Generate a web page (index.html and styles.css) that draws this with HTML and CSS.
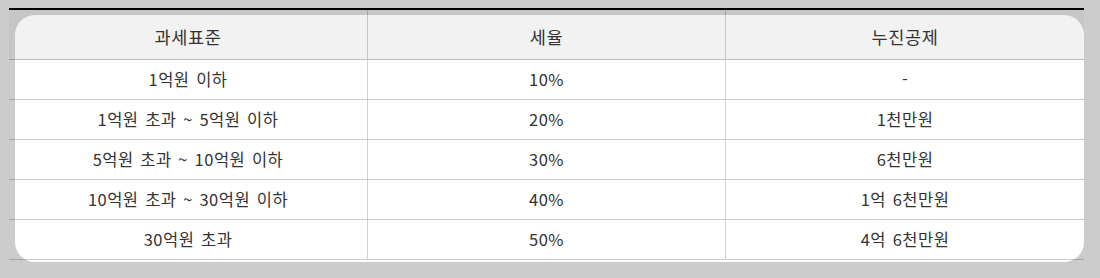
FILE: index.html
```html
<!DOCTYPE html>
<html lang="ko">
<head>
<meta charset="utf-8">
<link rel="stylesheet" href="styles.css">
</head>
<body>
<div class="wrap">
  <div class="card">
    <div class="table">
      <div class="row head">
        <div class="cell">과세표준</div>
        <div class="cell">세율</div>
        <div class="cell">누진공제</div>
      </div>
      <div class="row">
        <div class="cell">1억원 이하</div>
        <div class="cell">10%</div>
        <div class="cell">-</div>
      </div>
      <div class="row">
        <div class="cell">1억원 초과 ~ 5억원 이하</div>
        <div class="cell">20%</div>
        <div class="cell">1천만원</div>
      </div>
      <div class="row">
        <div class="cell">5억원 초과 ~ 10억원 이하</div>
        <div class="cell">30%</div>
        <div class="cell">6천만원</div>
      </div>
      <div class="row">
        <div class="cell">10억원 초과 ~ 30억원 이하</div>
        <div class="cell">40%</div>
        <div class="cell">1억 6천만원</div>
      </div>
      <div class="row">
        <div class="cell">30억원 초과</div>
        <div class="cell">50%</div>
        <div class="cell">4억 6천만원</div>
      </div>
    </div>
  </div>
</div>
</body>
</html>
```
FILE: styles.css
```css
html, body {
  margin: 0;
  padding: 0;
  background: #cccccc;
}
body {
  font-family: "Noto Sans CJK KR", "Noto Sans", sans-serif;
  color: #333333;
}
.wrap {
  margin: 8px 0 0 9px;
  width: 1075px;
  border-top: 2px solid #000000;
  background: linear-gradient(#c6c6c6 0 49px, transparent 49px);
}
.card {
  display: flex;
  flex-direction: column;
  margin: 5px 0 0 6px;
  padding-bottom: 2px;
  border-radius: 20px;
  background: linear-gradient(#f2f2f2 0 44px, #ffffff 44px);
}
.table {
  margin: -5px 0 0 -6px;
  display: flex;
  flex-direction: column;
}
.row {
  display: grid;
  grid-template-columns: 358px 358px 359px;
  height: 40px;
  border-bottom: 1px solid rgba(0, 0, 0, 0.2);
  box-sizing: border-box;
}
.row.head {
  height: 50px;
  border-bottom: 1px solid rgba(0, 0, 0, 0.25);
}
.row.head .cell {
  padding-top: 5px;
  font-size: 17.5px;
  letter-spacing: 0.6px;
}
.cell {
  display: flex;
  align-items: center;
  justify-content: center;
  font-size: 16.5px;
  letter-spacing: 0.5px;
  word-spacing: 1.5px;
  line-height: 1;
  box-sizing: border-box;
}
.cell + .cell {
  border-left: 1px solid rgba(0, 0, 0, 0.18);
}
```
